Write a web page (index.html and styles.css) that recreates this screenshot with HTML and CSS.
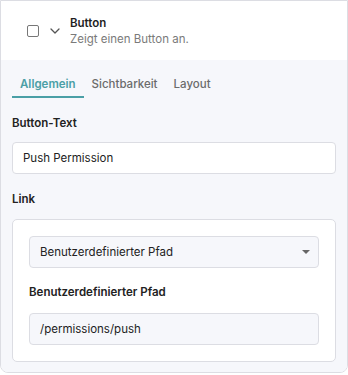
FILE: index.html
```html
<!DOCTYPE html>
<html lang="de">
<head>
<meta charset="utf-8">
<link rel="stylesheet" href="styles.css">
</head>
<body>
<div class="card">
  <div class="header">
    <span class="checkbox"></span>
    <svg class="chevron" width="10" height="6" viewBox="0 0 10 6"><path d="M1 1l4 4 4-4" fill="none" stroke="#555" stroke-width="1.3" stroke-linecap="round" stroke-linejoin="round"/></svg>
    <div class="titles">
      <div class="title">Button</div>
      <div class="subtitle">Zeigt einen Button an.</div>
    </div>
  </div>
  <div class="panel">
    <div class="tabs">
      <div class="tab active">Allgemein</div>
      <div class="tab">Sichtbarkeit</div>
      <div class="tab">Layout</div>
    </div>
    <div class="label first">Button-Text</div>
    <div class="input">Push Permission</div>
    <div class="label">Link</div>
    <div class="inner">
      <div class="select">
        <span>Benutzerdefinierter Pfad</span>
        <svg width="8" height="4" viewBox="0 0 8 4"><path d="M0 0h8L4 4z" fill="#666"/></svg>
      </div>
      <div class="label sub">Benutzerdefinierter Pfad</div>
      <div class="input gray">/permissions/push</div>
    </div>
  </div>
</div>
</body>
</html>
```
FILE: styles.css
```css
html, body {
  margin: 0;
  padding: 0;
  background: #ffffff;
}
body {
  font-family: Inter, "Noto Sans", sans-serif;
  font-size: 11.5px;
  color: #222;
}
.card {
  width: 348px;
  box-sizing: border-box;
  border: 1px solid #dcdde3;
  border-radius: 0 0 8px 8px;
  overflow: hidden;
}
.header {
  height: 59px;
  background: #fff;
  display: flex;
  align-items: center;
  padding-left: 26px;
}
.checkbox {
  width: 10px;
  height: 10px;
  border: 1.5px solid #777;
  border-radius: 2px;
}
.chevron {
  margin-left: 11px;
}
.titles {
  margin-left: 10px;
  line-height: 16px;
}
.title {
  font-weight: 600;
  color: #1f1f1f;
}
.subtitle {
  color: #7a7a7a;
}
.panel {
  background: #f6f7fb;
  padding: 0 11px 10px;
}
.tabs {
  display: flex;
}
.tab {
  padding: 16px 8px 4px;
  line-height: 16px;
  font-weight: 500;
  color: #6b6b6b;
  border-bottom: 2px solid transparent;
}
.tab.active {
  color: #4a9fa6;
  border-bottom-color: #4a9fa6;
  font-weight: 600;
}
.label {
  font-weight: 600;
  line-height: 16px;
  margin: 17px 0 11px;
  color: #222;
}
.label.sub {
  margin: 16px 0 13px;
}
.input {
  height: 32px;
  box-sizing: border-box;
  border: 1px solid #dcdde3;
  border-radius: 4px;
  background: #fff;
  padding: 0 10px;
  display: flex;
  align-items: center;
  color: #222;
}
.input.gray {
  background: #f6f7fb;
}
.inner {
  margin-top: 12px;
  background: #fff;
  border: 1px solid #dcdde3;
  border-radius: 5px;
  padding: 16px;
}
.select {
  height: 32px;
  box-sizing: border-box;
  border: 1px solid #dcdde3;
  border-radius: 4px;
  background: #f6f7fb;
  padding: 0 8px 0 10px;
  display: flex;
  align-items: center;
  justify-content: space-between;
}
```
